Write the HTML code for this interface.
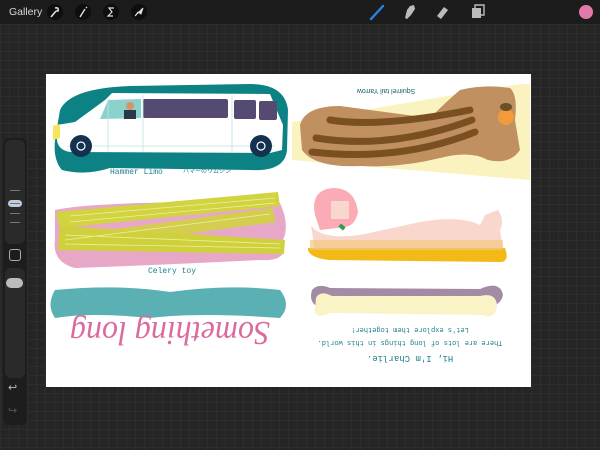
<!DOCTYPE html>
<html><head><meta charset="utf-8"><style>
html,body{margin:0;padding:0;width:600px;height:450px;overflow:hidden;background:#262626;font-family:"Liberation Sans",sans-serif}
.grid{position:absolute;left:0;top:24px;width:600px;height:426px;background-color:#252525;background-image:linear-gradient(#2d2d2d 1px,transparent 1px),linear-gradient(90deg,#2d2d2d 1px,transparent 1px);background-size:9px 9px}
.top{position:absolute;left:0;top:0;width:600px;height:24px;background:#1c1c1c}
.gal{position:absolute;left:9px;top:6px;color:#d8d8d8;font-size:10.5px}
.side{position:absolute;left:3px;top:138px;width:24px;height:287px;background:#1d1d1d;border-radius:6px}
</style></head><body>
<div class="grid"></div>
<div class="top">
<div class="gal">Gallery</div>
<svg width="600" height="24" style="position:absolute;left:0;top:0">
<circle cx="55" cy="12" r="8" fill="#0e0e0e"/><circle cx="83" cy="12" r="8" fill="#0e0e0e"/><circle cx="111" cy="12" r="8" fill="#0e0e0e"/><circle cx="139" cy="12" r="8" fill="#0e0e0e"/>
<path d="M51 17 L56 11 M55 8 Q59 7 58 11 L56 11" stroke="#ddd" stroke-width="1.6" fill="none"/>
<path d="M80 17 L85 9 M86 7 L87 8" stroke="#ddd" stroke-width="1.4"/>
<path d="M114 8 H109 L112 12 L108 16 H113" stroke="#ddd" stroke-width="1.2" fill="none"/>
<path d="M135 16 L143 8 L141 14 L138 12Z" fill="#ddd" stroke="#ddd"/>
<path d="M371 19 L383 6" stroke="#2a7fe0" stroke-width="2.4" stroke-linecap="round"/>
<path d="M405 18 L407 10 L410 6 L414 5 L415 9 L411 15 L407 19Z" fill="#bbb"/>
<path d="M437 16 L444 7 L448 10 L441 19Z" fill="#bbb"/>
<rect x="472" y="8" width="9" height="10" fill="#bbb"/><path d="M475 8V5H484V15H481" stroke="#bbb" stroke-width="1.4" fill="none"/>
<circle cx="586" cy="12" r="7" fill="#e07aab"/>
</svg>
</div>
<div class="side">
<div style="position:absolute;left:2px;top:2px;width:20px;height:104px;background:#2a2a2a;border-radius:6px"></div>
<div style="position:absolute;left:5px;top:62px;width:14px;height:7px;border-radius:4px;background:#ccc"><div style="margin:3px 2px;height:1px;background:#2a7fe0"></div></div>
<div style="position:absolute;left:7px;top:52px;width:10px;height:1px;background:#777"></div>
<div style="position:absolute;left:7px;top:75px;width:10px;height:1px;background:#777"></div>
<div style="position:absolute;left:7px;top:84px;width:10px;height:1px;background:#777"></div>
<div style="position:absolute;left:6px;top:111px;width:10px;height:10px;border:1px solid #aaa;border-radius:3px"></div>
<div style="position:absolute;left:2px;top:130px;width:20px;height:110px;background:#2a2a2a;border-radius:6px"></div>
<div style="position:absolute;left:3px;top:140px;width:17px;height:10px;border-radius:5px;background:#bbb"></div>
<div style="position:absolute;left:5px;top:243px;color:#bbb;font-size:11px">↩</div>
<div style="position:absolute;left:5px;top:266px;color:#555;font-size:11px">↪</div>
</div>
<svg width="600" height="450" style="position:absolute;left:0;top:0">
<rect x="46" y="74" width="485" height="313" fill="#fff"/>
<!-- limo -->
<path d="M60 110 Q70 88 130 86 L250 84 Q285 84 288 110 L287 150 Q285 172 250 170 L110 168 Q85 176 62 170 Q53 160 55 140Z" fill="#0d8285"/>
<path d="M57 125 L75 122 L105 100 L112 93 L270 94 L283 125 L282 150 L270 153 L70 152 Q58 150 57 140Z" fill="#fff"/>
<path d="M53 126 L60 124 L60 138 L53 140Z" fill="#f6e55a"/>
<path d="M108 100 L141 99 L141 118 L100 119Z" fill="#8cd2cc"/>
<circle cx="130" cy="106" r="4" fill="#d8936a"/><rect x="124" y="110" width="12" height="9" fill="#2a3848"/>
<rect x="143" y="99" width="85" height="19" rx="2" fill="#544a72"/>
<rect x="234" y="100" width="22" height="19" rx="2" fill="#544a72"/>
<rect x="259" y="101" width="18" height="19" rx="2" fill="#544a72"/>
<path d="M108 100V152M143 95V152M232 95V152M67 146H275" stroke="#bfe3e0" stroke-width="0.8"/>
<circle cx="81" cy="146" r="11" fill="#14324f"/><circle cx="81" cy="146" r="4" fill="none" stroke="#fff" stroke-width="1.2"/>
<circle cx="261" cy="146" r="11" fill="#14324f"/><circle cx="261" cy="146" r="4" fill="none" stroke="#fff" stroke-width="1.2"/>
<text x="110" y="174" font-size="8" fill="#1b7f8a" font-family="Liberation Mono">Hammer Limo</text>
<text x="183" y="173" font-size="6" fill="#1b7f8a" font-family="Noto Sans CJK JP">ハマーのリムジン</text>
<!-- squirrel -->
<path d="M292 122 L520 84 L530 84 L530 180 L292 160Z" fill="#fbf2b8" opacity="0.9"/>
<path d="M300 125 Q305 106 340 106 L430 118 Q448 100 460 90 Q485 84 510 88 Q518 95 515 120 L520 150 Q510 165 488 160 Q470 150 440 158 Q400 168 360 166 Q315 168 302 150Z" fill="#c09060"/>
<path d="M330 120 Q380 128 470 110 M316 138 Q390 150 472 120 M312 152 Q400 162 475 132" stroke="#7a4f22" stroke-width="7" fill="none" stroke-linecap="round"/>
<circle cx="506" cy="117" r="8" fill="#f39a3b"/><ellipse cx="506" cy="107" rx="6" ry="4" fill="#6b4f28"/>
<text x="386" y="95" font-size="7" fill="#1b5f6a" transform="rotate(180 386 92)" text-anchor="middle">Squirrel tail  Yarrow</text>
<!-- celery -->
<path d="M55 210 Q100 200 280 203 Q290 225 283 240 Q290 262 260 260 Q160 265 75 268 Q52 262 55 240Z" fill="#e7a7c6"/>
<path d="M56 212 L278 192 L280 206 L60 228Z" fill="#d1d340"/>
<path d="M58 237 L272 208 L276 222 L60 250Z" fill="#d1d340" opacity="0.9"/>
<path d="M60 226 L285 240 L284 254 L58 250 Z" fill="#cfd13c"/>
<path d="M70 216 L275 198 M70 222 L275 203 M65 240 L270 214 M65 244 L280 248 M65 235 L280 244" stroke="#eef0a0" stroke-width="0.8"/>
<text x="148" y="273" font-size="8" fill="#1b7f8a" font-family="Liberation Mono">Celery toy</text>
<!-- girl -->
<path d="M311 225 Q320 240 360 235 L420 222 Q460 215 480 225 L485 215 L498 210 Q505 220 500 230 L503 250 L315 252Z" fill="#f9d7cc"/>
<path d="M315 215 Q310 190 333 188 Q355 188 358 212 Q355 226 345 227 L320 230Z" fill="#fbabb5"/>
<rect x="331" y="201" width="18" height="18" fill="#f9d7cc"/>
<path d="M308 248 L505 248 Q510 262 500 262 L330 260 Q310 258 308 250Z" fill="#f2b917"/>
<path d="M310 240 L503 240 L503 250 L310 250Z" fill="#f4c880" opacity="0.7"/>
<rect x="339" y="225" width="6" height="4" fill="#2e9a52" transform="rotate(40 342 227)"/>
<!-- teal blob & script -->
<path d="M55 290 Q120 284 170 292 Q230 284 280 290 Q292 305 280 318 Q200 312 150 318 Q90 312 55 318 Q46 305 55 290Z" fill="#5bb0b4"/>
<text x="170" y="342" font-size="34" fill="#db6b9f" font-family="Liberation Serif" font-style="italic" text-anchor="middle" textLength="200" lengthAdjust="spacingAndGlyphs" transform="rotate(180 170 332)">Something long</text>
<!-- bone -->
<path d="M312 290 Q318 283 330 288 L480 289 Q500 280 503 295 Q500 308 485 305 L315 305 Q309 300 312 290Z" fill="#a38aa5"/>
<path d="M316 298 Q320 290 332 296 L480 296 Q497 292 497 307 Q494 320 483 315 L330 313 Q315 320 315 310Z" fill="#faf3c6"/>
<g fill="#1b7f8a" font-size="7" font-family="Liberation Mono" text-anchor="middle">
<text x="410" y="332" transform="rotate(180 410 330)">Let's explore them together!</text>
<text x="410" y="345" transform="rotate(180 410 343)">There are lots of long things in this world.</text>
<text x="410" y="362" font-size="9" transform="rotate(180 410 359)">Hi, I'm Charlie.</text>
</g>
</svg>
</body></html>
